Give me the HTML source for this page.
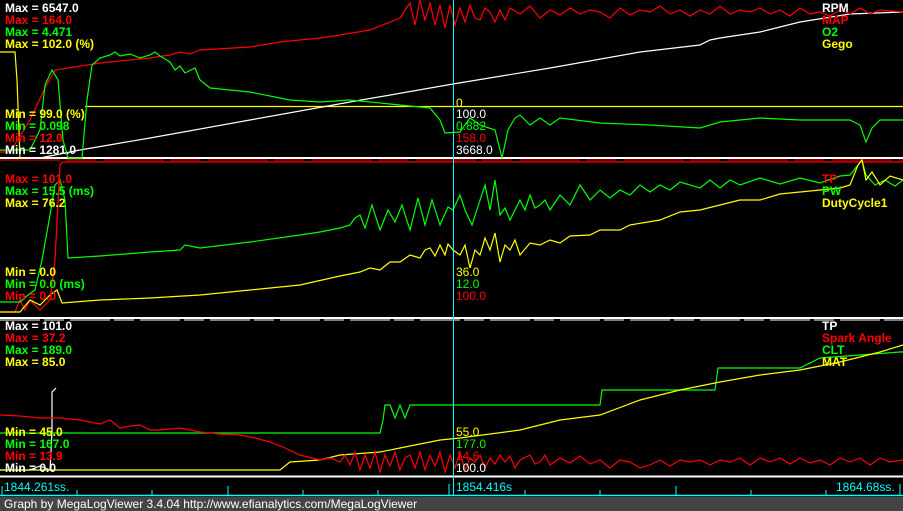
<!DOCTYPE html>
<html><head><meta charset="utf-8"><style>
body{margin:0;background:#000;width:903px;height:511px;overflow:hidden;position:relative;font-family:"Liberation Sans",sans-serif}
.l{position:absolute;font-size:12px;line-height:12px;white-space:nowrap}
.b{font-weight:bold}
.w{color:#fff}.r{color:#f00}.g{color:#0f0}.y{color:#ff0}.c{color:#0ff}
</style></head><body>
<svg width="903" height="511" style="position:absolute;left:0;top:0" fill="none" stroke-width="1.2">
<line x1="0" y1="158" x2="903" y2="158" stroke="#fff" stroke-width="2"/>
<line x1="0" y1="160" x2="903" y2="160" stroke="#f00" stroke-width="1" stroke-dasharray="60,6,30,8"/>
<line x1="0" y1="318" x2="903" y2="318" stroke="#fff" stroke-width="2"/>
<line x1="0" y1="320" x2="903" y2="320" stroke="#fff" stroke-width="1" stroke-dasharray="40,4,20,6"/>
<line x1="0" y1="476.5" x2="903" y2="476.5" stroke="#fff" stroke-width="2"/>
<!-- panel 1 -->
<polyline stroke="#ff0" points="0,52 15,52 17,80 20,158"/>
<line x1="85" y1="106.5" x2="903" y2="106.5" stroke="#ff0"/>
<polyline stroke="#fff" points="40,158 80,150 150,138 250,120 350,102 453,84 550,68 640,52 700,45 710,40 720,38 760,32 800,22 850,14 903,12"/>
<polyline stroke="#f00" points="0,152 10,152 30,120 45,88 55,70 100,63 150,58 170,55 180,52 190,54 200,50 250,47 280,42 300,40 320,38 340,35 370,30 400,18 405,10 410,3 415,25 420,0 425,20 430,3 435,25 440,5 445,28 450,5 455,25 460,8 465,22 470,5 475,18 480,20 485,8 490,12 495,22 500,10 505,20 510,8 520,14 530,6 540,18 550,10 560,15 570,8 580,14 590,10 600,12 610,18 620,8 630,15 640,10 650,12 660,6 670,14 680,10 690,16 700,10 710,14 720,6 730,14 740,10 750,12 760,8 770,14 780,10 790,16 800,8 810,14 820,12 830,16 840,10 850,14 860,8 870,14 880,10 903,12"/>
<polyline stroke="#0f0" points="0,150 30,150 40,130 45,85 52,70 58,80 63,140 68,158 82,158 87,100 92,65 100,58 110,55 115,52 120,56 130,54 140,58 150,55 155,52 160,56 170,62 175,70 180,66 185,73 195,68 200,80 210,88 250,92 290,100 320,102 350,100 400,105 430,108 440,120 445,133 460,132 470,118 480,125 495,130 502,158 508,130 515,118 520,115 530,125 540,118 550,125 560,118 600,123 650,125 700,128 720,122 760,118 800,120 850,120 860,125 866,142 872,128 880,120 903,120"/>
<!-- panel 2 -->
<polyline stroke="#f00" points="0,312 15,312 20,300 25,310 30,300 40,310 50,300 55,260 60,165 63,162 903,162"/>
<polyline stroke="#0f0" points="0,302 20,302 28,295 35,290 42,260 50,215 55,185 60,180 65,200 68,258 100,256 150,252 180,250 185,245 200,248 250,242 300,235 320,232 340,228 350,225 355,218 360,215 365,228 372,205 380,230 388,210 395,222 402,205 410,230 418,198 425,225 432,200 440,225 448,207 453,210 460,195 465,210 472,225 480,200 485,185 490,210 495,180 500,215 505,208 510,220 520,200 525,210 530,195 535,208 540,205 545,200 550,210 560,195 570,205 580,185 590,200 600,190 610,198 620,190 630,195 640,185 650,192 660,185 670,190 680,182 700,188 710,180 720,188 730,180 740,185 760,178 780,184 800,178 820,183 840,176 850,175 858,165 862,160 866,175 875,185 885,180 895,186 903,180"/>
<polyline stroke="#ff0" points="0,312 20,312 30,300 40,305 50,295 57,290 62,303 100,300 150,298 200,295 250,290 300,285 340,276 360,272 370,268 380,270 390,262 400,262 410,255 420,258 425,250 430,248 435,256 440,245 445,255 448,244 453,250 460,255 465,245 470,268 475,250 480,255 485,238 490,250 495,233 500,262 505,245 510,250 515,240 520,255 530,243 540,245 550,240 560,243 570,236 590,235 600,230 620,230 630,225 660,220 680,212 700,210 720,205 740,200 760,200 780,194 800,192 820,190 840,188 850,185 858,165 862,160 866,180 872,172 880,185 890,176 903,180"/>
<!-- panel 3 -->
<polyline stroke="#fff" points="0,470 30,470 40,466 50,470 52,432 52,392 56,388"/>
<polyline stroke="#0f0" points="0,433 380,433 383,420 385,405 390,405 395,418 400,405 405,418 410,405 600,405 602,390 715,390 718,368 800,368 820,358 900,352 903,352"/>
<polyline stroke="#ff0" points="0,470 280,470 290,462 320,460 340,455 380,452 400,448 440,440 460,438 520,430 560,420 600,415 640,400 680,390 720,382 760,375 800,370 840,362 880,352 903,345"/>
<polyline stroke="#f00" points="0,415 20,416 40,418 60,418 80,420 90,422 100,424 110,420 120,428 130,426 140,425 150,430 160,430 180,428 200,432 220,434 240,435 255,438 270,442 285,448 300,455 320,460 330,458 340,462 345,455 350,465 355,452 360,470 365,455 370,468 375,452 380,472 385,455 390,466 395,452 400,470 405,458 410,455 415,468 420,452 425,470 430,455 435,466 440,452 445,472 450,455 455,468 460,452 465,470 470,458 475,462 480,455 485,468 490,458 495,464 500,455 505,462 510,456 515,468 520,460 530,455 535,464 540,462 545,455 550,465 560,458 570,463 580,456 590,464 600,460 610,468 620,460 630,462 640,468 650,465 660,460 670,466 680,460 690,462 700,460 710,465 720,460 730,462 740,458 750,465 760,458 770,462 780,458 790,464 800,458 810,463 820,460 830,465 840,458 850,462 860,458 870,465 880,458 890,462 903,460"/>
<line x1="453.5" y1="0" x2="453.5" y2="496" stroke="#0ff" stroke-width="1"/>
<line x1="0" y1="495.5" x2="903" y2="495.5" stroke="#0ff" stroke-width="1.5"/>
<g stroke="#0ff" stroke-width="1">
<line x1="2" y1="486" x2="2" y2="496"/><line x1="77" y1="490" x2="77" y2="496"/><line x1="152" y1="490" x2="152" y2="496"/><line x1="228" y1="486" x2="228" y2="496"/><line x1="303" y1="490" x2="303" y2="496"/><line x1="378" y1="490" x2="378" y2="496"/><line x1="449" y1="484" x2="449" y2="496"/><line x1="525" y1="490" x2="525" y2="496"/><line x1="600" y1="490" x2="600" y2="496"/><line x1="676" y1="486" x2="676" y2="496"/><line x1="751" y1="490" x2="751" y2="496"/><line x1="826" y1="490" x2="826" y2="496"/><line x1="900" y1="484" x2="900" y2="496"/>
</g>
<rect x="0" y="497" width="903" height="14" fill="#444" stroke="none"/>
</svg>
<div class="l b w" style="left:5px;top:2px">Max = 6547.0</div>
<div class="l b r" style="left:5px;top:14px">Max = 164.0</div>
<div class="l b g" style="left:5px;top:26px">Max = 4.471</div>
<div class="l b y" style="left:5px;top:38px">Max = 102.0 (%)</div>
<div class="l b y" style="left:5px;top:108px">Min = 99.0 (%)</div>
<div class="l b g" style="left:5px;top:120px">Min = 0.098</div>
<div class="l b r" style="left:5px;top:132px">Min = 12.0</div>
<div class="l b w" style="left:5px;top:144px">Min = 1281.0</div>
<div class="l b w" style="left:822px;top:2px">RPM</div>
<div class="l b r" style="left:822px;top:14px">MAP</div>
<div class="l b g" style="left:822px;top:26px">O2</div>
<div class="l b y" style="left:822px;top:38px">Gego</div>
<div class="l y" style="left:456px;top:97px">0</div>
<div class="l w" style="left:456px;top:108px">100.0</div>
<div class="l g" style="left:456px;top:120px">0.882</div>
<div class="l r" style="left:456px;top:132px">158.0</div>
<div class="l w" style="left:456px;top:144px">3668.0</div>
<div class="l b r" style="left:5px;top:173px">Max = 101.0</div>
<div class="l b g" style="left:5px;top:185px">Max = 15.5 (ms)</div>
<div class="l b y" style="left:5px;top:197px">Max = 76.2</div>
<div class="l b y" style="left:5px;top:266px">Min = 0.0</div>
<div class="l b g" style="left:5px;top:278px">Min = 0.0 (ms)</div>
<div class="l b r" style="left:5px;top:290px">Min = 0.0</div>
<div class="l b r" style="left:822px;top:173px">TP</div>
<div class="l b g" style="left:822px;top:185px">PW</div>
<div class="l b y" style="left:822px;top:197px">DutyCycle1</div>
<div class="l y" style="left:456px;top:266px">36.0</div>
<div class="l g" style="left:456px;top:278px">12.0</div>
<div class="l r" style="left:456px;top:290px">100.0</div>
<div class="l b w" style="left:5px;top:320px">Max = 101.0</div>
<div class="l b r" style="left:5px;top:332px">Max = 37.2</div>
<div class="l b g" style="left:5px;top:344px">Max = 189.0</div>
<div class="l b y" style="left:5px;top:356px">Max = 85.0</div>
<div class="l b y" style="left:5px;top:426px">Min = 45.0</div>
<div class="l b g" style="left:5px;top:438px">Min = 167.0</div>
<div class="l b r" style="left:5px;top:450px">Min = 13.9</div>
<div class="l b w" style="left:5px;top:462px">Min = 0.0</div>
<div class="l b w" style="left:822px;top:320px">TP</div>
<div class="l b r" style="left:822px;top:332px">Spark Angle</div>
<div class="l b g" style="left:822px;top:344px">CLT</div>
<div class="l b y" style="left:822px;top:356px">MAT</div>
<div class="l y" style="left:456px;top:426px">55.0</div>
<div class="l g" style="left:456px;top:438px">177.0</div>
<div class="l r" style="left:456px;top:450px">14.6</div>
<div class="l w" style="left:456px;top:462px">100.0</div>
<div class="l c" style="left:4px;top:481px">1844.261ss.</div>
<div class="l c" style="left:456px;top:481px">1854.416s</div>
<div class="l c" style="left:836px;top:481px">1864.68ss.</div>
<div class="l" style="left:4px;top:498px;color:#fff">Graph by MegaLogViewer 3.4.04 http://www.efianalytics.com/MegaLogViewer</div>
</body></html>
